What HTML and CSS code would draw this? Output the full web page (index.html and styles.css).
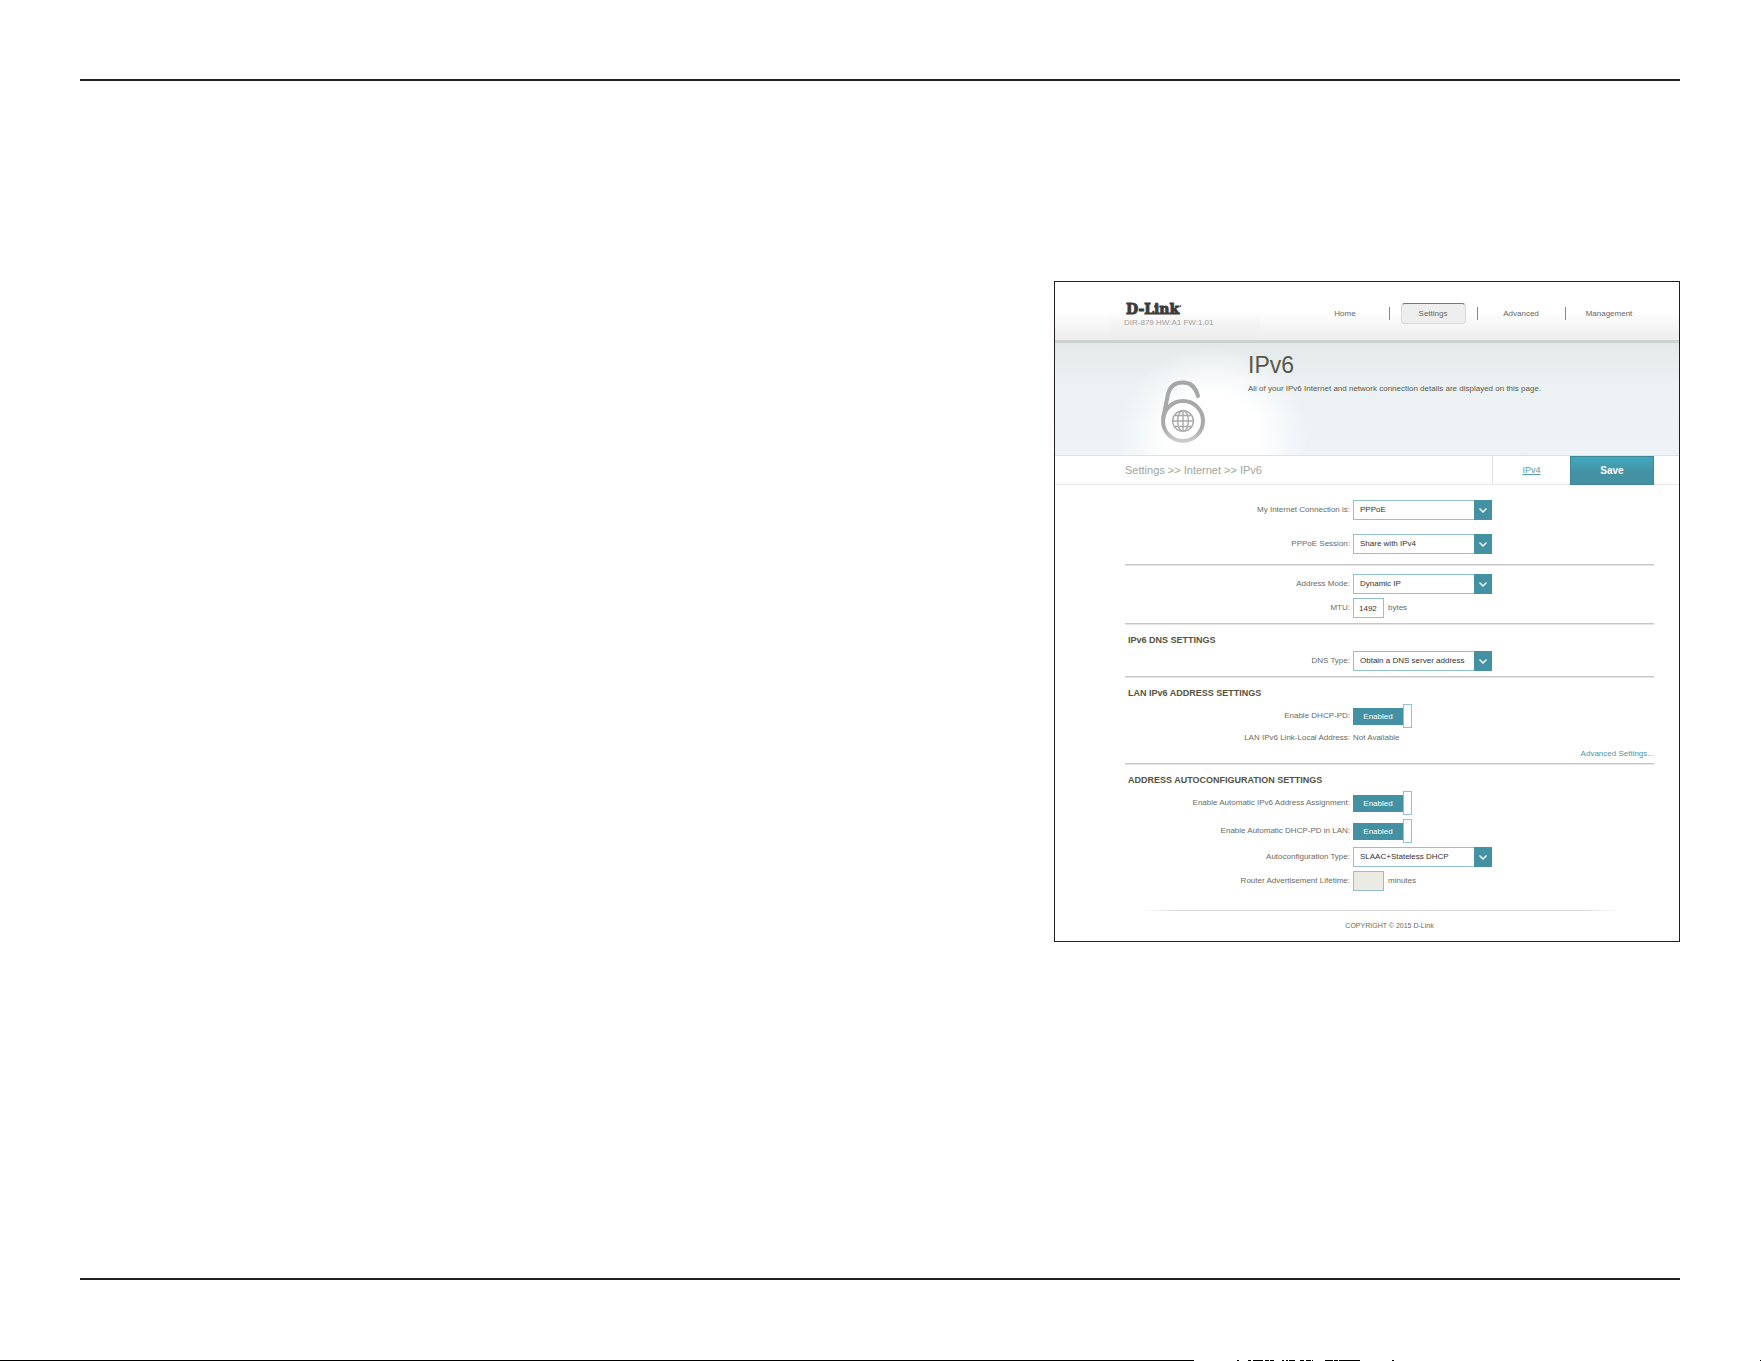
FILE: index.html
```html
<!DOCTYPE html>
<html lang="en">
<head>
<meta charset="utf-8">
<title>IPv6 Settings</title>
<link rel="stylesheet" href="styles.css">
</head>
<body>
<div class="page">
  <main class="sheet">
    <div class="panel">
      <header class="top">
        <div class="brand">
          <div class="logo">D-Link<span class="mark">'</span></div>
          <div class="model">DIR-879 HW:A1 FW:1.01</div>
        </div>
        <nav class="nav">
          <a href="#home"><span>Home</span></a>
          <a href="#settings" class="current"><span>Settings</span></a>
          <a href="#advanced"><span>Advanced</span></a>
          <a href="#management"><span>Management</span></a>
        </nav>
      </header>

      <section class="hero">
        <svg class="lock" viewBox="0 0 46 64" width="46" height="64" fill="none" aria-hidden="true">
          <defs>
            <linearGradient id="metal" x1="0" y1="0" x2="0" y2="64" gradientUnits="userSpaceOnUse">
              <stop offset="0" stop-color="#a6a6a6"/>
              <stop offset=".75" stop-color="#aaaaaa"/>
              <stop offset="1" stop-color="#d2d4d4"/>
            </linearGradient>
          </defs>
          <g stroke="url(#metal)">
            <circle cx="23" cy="41" r="20" stroke-width="4"/>
            <path d="M3.500 37 L8 14 C10 6 16 2.500 23 2.500 C31 2.500 36 8 38 16" stroke-width="4" stroke-linecap="round"/>
            <g stroke-width="1.4">
              <circle cx="23" cy="41" r="10.4"/>
              <ellipse cx="23" cy="41" rx="5.4" ry="10.4"/>
              <path d="M23 30.500V51.500M12.500 41H33.500M14.500 35.500H31.500M14.500 46.500H31.500"/>
            </g>
          </g>
        </svg>
        <div class="intro">
          <h1>IPv6</h1>
          <p>All of your IPv6 Internet and network connection details are displayed on this page.</p>
        </div>
      </section>

      <div class="bar">
        <div class="crumbs">Settings &gt;&gt; Internet &gt;&gt; IPv6</div>
        <a class="switch" href="#ipv4">IPv4</a>
        <button class="save" type="submit" form="ipv6">Save</button>
      </div>

      <form id="ipv6" class="form">
        <section class="group wide">
          <div class="row"><label for="conn">My Internet Connection is:</label>
            <span class="select"><select id="conn"><option>PPPoE</option></select><svg viewBox="0 0 18 20" aria-hidden="true"><path d="M5.500 8.500L9 12L12.500 8.500"/></svg></span></div>
          <div class="row"><label for="sess">PPPoE Session:</label>
            <span class="select"><select id="sess"><option>Share with IPv4</option></select><svg viewBox="0 0 18 20" aria-hidden="true"><path d="M5.500 8.500L9 12L12.500 8.500"/></svg></span></div>
        </section>

        <section class="group">
          <div class="row"><label for="mode">Address Mode:</label>
            <span class="select"><select id="mode"><option>Dynamic IP</option></select><svg viewBox="0 0 18 20" aria-hidden="true"><path d="M5.500 8.500L9 12L12.500 8.500"/></svg></span></div>
          <div class="row"><label for="mtu">MTU:</label>
            <span class="field"><input id="mtu" type="text" value="1492"> bytes</span></div>
        </section>

        <section class="group">
          <h2>IPv6 DNS SETTINGS</h2>
          <div class="row"><label for="dns">DNS Type:</label>
            <span class="select"><select id="dns"><option>Obtain a DNS server address</option></select><svg viewBox="0 0 18 20" aria-hidden="true"><path d="M5.500 8.500L9 12L12.500 8.500"/></svg></span></div>
        </section>

        <section class="group lan">
          <h2>LAN IPv6 ADDRESS SETTINGS</h2>
          <div class="row"><label for="pd">Enable DHCP-PD:</label>
            <span class="toggle"><input id="pd" type="checkbox" checked><span class="state">Enabled</span><span class="handle"></span></span></div>
          <div class="row"><span class="name">LAN IPv6 Link-Local Address:</span><span>Not Available</span></div>
          <a class="more" href="#more">Advanced Settings...</a>
        </section>

        <section class="group last">
          <h2>ADDRESS AUTOCONFIGURATION SETTINGS</h2>
          <div class="row"><label for="auto">Enable Automatic IPv6 Address Assignment:</label>
            <span class="toggle"><input id="auto" type="checkbox" checked><span class="state">Enabled</span><span class="handle"></span></span></div>
          <div class="row"><label for="lanpd">Enable Automatic DHCP-PD in LAN:</label>
            <span class="toggle"><input id="lanpd" type="checkbox" checked><span class="state">Enabled</span><span class="handle"></span></span></div>
          <div class="row"><label for="type">Autoconfiguration Type:</label>
            <span class="select"><select id="type"><option>SLAAC+Stateless DHCP</option></select><svg viewBox="0 0 18 20" aria-hidden="true"><path d="M5.500 8.500L9 12L12.500 8.500"/></svg></span></div>
          <div class="row"><label for="life">Router Advertisement Lifetime:</label>
            <span class="field"><input id="life" type="text" disabled> minutes</span></div>
        </section>
      </form>

      <footer class="copyright">COPYRIGHT © 2015 D-Link</footer>
    </div>
  </main>
  <div class="edge">
    <span class="edge-line"></span>
    <svg width="567" height="1" aria-hidden="true"><path d="M43 .5h2M54 .5h3M59 .5h10M71 .5h4M76 .5h4M88 .5h2M92 .5h2M95 .5h6M106 .5h4M112 .5h5M118 .5h1M131 .5h8M140 .5h4M145 .5h21M198 .5h2M566 .5h1" stroke="#000"/></svg>
  </div>
</div>
</body>
</html>
```
FILE: styles.css
```css
* { box-sizing: border-box; }

body {
  margin: 0;
  background: #fff;
  color: #6b6b63;
  font-family: "Liberation Sans", Arial, sans-serif;
  font-size: 8px;
  line-height: 12px;
}

h1, h2, p { margin: 0; }

.page {
  display: flex;
  flex-direction: column;
  min-height: 100vh;
  padding-top: 79px;
}

.sheet {
  flex: 1;
  display: grid;
  grid-template-columns: 974fr 626fr;
  align-items: start;
  margin: 0 81px 80px 80px;
  padding: 200px 0;
  border-top: 2px solid #231f20;
  border-bottom: 2px solid #231f20;
}

.panel {
  grid-column: 2;
  border: 1px solid #231f20;
}

/* Header */
.top {
  display: flex;
  justify-content: space-between;
  height: 61px;
  padding: 0 26px 0 55px;
  background: linear-gradient(#fff 50%, #ededed);
  border-bottom: 3px solid #cdd1d1;
}

.brand {
  width: 150px;
  padding: 19px 0 0 14px;
  background: linear-gradient(rgba(236, 236, 236, 0) 50%, rgba(236, 236, 236, .4) 90%, rgba(236, 236, 236, 0));
  color: #a0a0a0;
}

.logo {
  display: flex;
  padding-left: 2px;
  color: #3c3c3c;
  font: bold 14px/16px "DejaVu Serif", serif;
  -webkit-text-stroke: 1px #3c3c3c;
}

.mark { font-size: 8px; line-height: 12px; -webkit-text-stroke: 0; }

.model { line-height: 12px; }

.nav {
  display: grid;
  grid-template-columns: repeat(4, 88px);
  align-content: start;
  padding-top: 21px;
}

.nav a {
  display: flex;
  justify-content: center;
  color: #666;
  text-decoration: none;
  background: linear-gradient(#888, #888) left center / 1px 13px no-repeat;
}

.nav a:first-child { background: none; }

.nav span {
  width: 65px;
  border: 1px solid transparent;
  border-radius: 4px;
  line-height: 19px;
  text-align: center;
}

.nav .current span {
  background: #eee;
  border-color: #777 #d8d8d8 #d8d8d8;
}

/* Page banner */
.hero {
  display: grid;
  grid-template-columns: 193px 1fr;
  height: 113px;
  background:
    radial-gradient(circle at 158px 98px, #fff 46px, rgba(255, 255, 255, 0) 96px),
    linear-gradient(#e3e8e9, #ecf1f3 35%, #edf3f6);
  border-bottom: 1px solid #dde3e4;
}

.lock { margin: 37px 0 0 105px; }

.intro { padding-top: 10px; color: #5a5948; }

.intro h1 { font-size: 23px; font-weight: normal; line-height: 24px; }

.intro p { margin-top: 6px; }

/* Breadcrumb bar */
.bar {
  display: flex;
  height: 29px;
  padding: 0 25px 0 70px;
  border-bottom: 1px solid #e8e8e8;
}

.crumbs { flex: 1; color: #a3a3a0; font-size: 11px; line-height: 29px; }

.switch {
  width: 78px;
  border: 1px solid #e0e0e0;
  border-width: 0 0 0 1px;
  color: #5a9cab;
  font-size: 9px;
  line-height: 29px;
  text-align: center;
}

.save {
  width: 84px;
  height: 29px;
  padding: 0;
  background: linear-gradient(#43a8be, #4391a3 60%);
  border: 1px solid #3f8797;
  color: #fff;
  font: bold 10px/12px "Liberation Sans", Arial, sans-serif;
}

/* Form */
.form { padding: 0 25px 0 70px; }

.group {
  display: grid;
  gap: 4px;
  padding: 9px 0 5px;
  border-bottom: 1px solid #c6c6c6;
  box-shadow: 0 1px #e6e6e6;
}

.group.wide { gap: 14px; padding: 15px 0 10px; }

.group.lan { padding-bottom: 3px; }

.group.last { padding-bottom: 0; border: 0; box-shadow: none; }

.group h2 {
  padding: 1px 0 1px 3px;
  color: #55533f;
  font-size: 9px;
  line-height: 12px;
}

.row {
  display: grid;
  grid-template-columns: 225fr 301fr;
  gap: 3px;
  align-items: center;
}

.row label, .name { text-align: right; }

.select {
  display: grid;
  width: 139px;
}

.select select, .select svg { grid-area: 1 / 1; }

.select select {
  appearance: none;
  width: 100%;
  height: 20px;
  margin: 0;
  padding: 0 20px 0 6px;
  background: #fff;
  border: 1px solid #94c2cc;
  border-radius: 0;
  color: #333;
  font: 8px/12px "Liberation Sans", Arial, sans-serif;
}

.select svg {
  justify-self: end;
  width: 18px;
  height: 20px;
  background: #4391a3;
  fill: none;
  stroke: #fff;
  stroke-width: 1.4;
  pointer-events: none;
}

.field { display: flex; align-items: center; gap: 4px; }

.field input {
  width: 31px;
  height: 20px;
  padding: 0 5px;
  background: #fff;
  border: 1px solid #94c2cc;
  color: #333;
  font: 8px/12px "Liberation Sans", Arial, sans-serif;
}

.field input:disabled { background: #ebebe4; }

.toggle {
  display: flex;
  align-items: center;
  position: relative;
}

.toggle input {
  position: absolute;
  width: 59px;
  height: 24px;
  margin: 0;
  opacity: 0;
}

.state {
  width: 50px;
  background: #4391a3;
  color: #fff;
  line-height: 17px;
  text-align: center;
}

.handle {
  width: 9px;
  height: 24px;
  background: #fff;
  border: 1px solid #94c2cc;
}

.more {
  justify-self: end;
  color: #4f94a4;
  text-decoration: none;
}

/* Footer */
.copyright {
  margin: 19px 25px 0 70px;
  padding: 10px 0 9px;
  background: linear-gradient(90deg, rgba(216, 216, 216, 0) 3%, #d8d8d8 10%, #d8d8d8 86%, rgba(216, 216, 216, 0) 94%) top / 100% 1px no-repeat;
  font-size: 7px;
  text-align: center;
}

.edge { display: flex; height: 1px; overflow: hidden; }

.edge-line { flex: 1; background: #000; }
```
